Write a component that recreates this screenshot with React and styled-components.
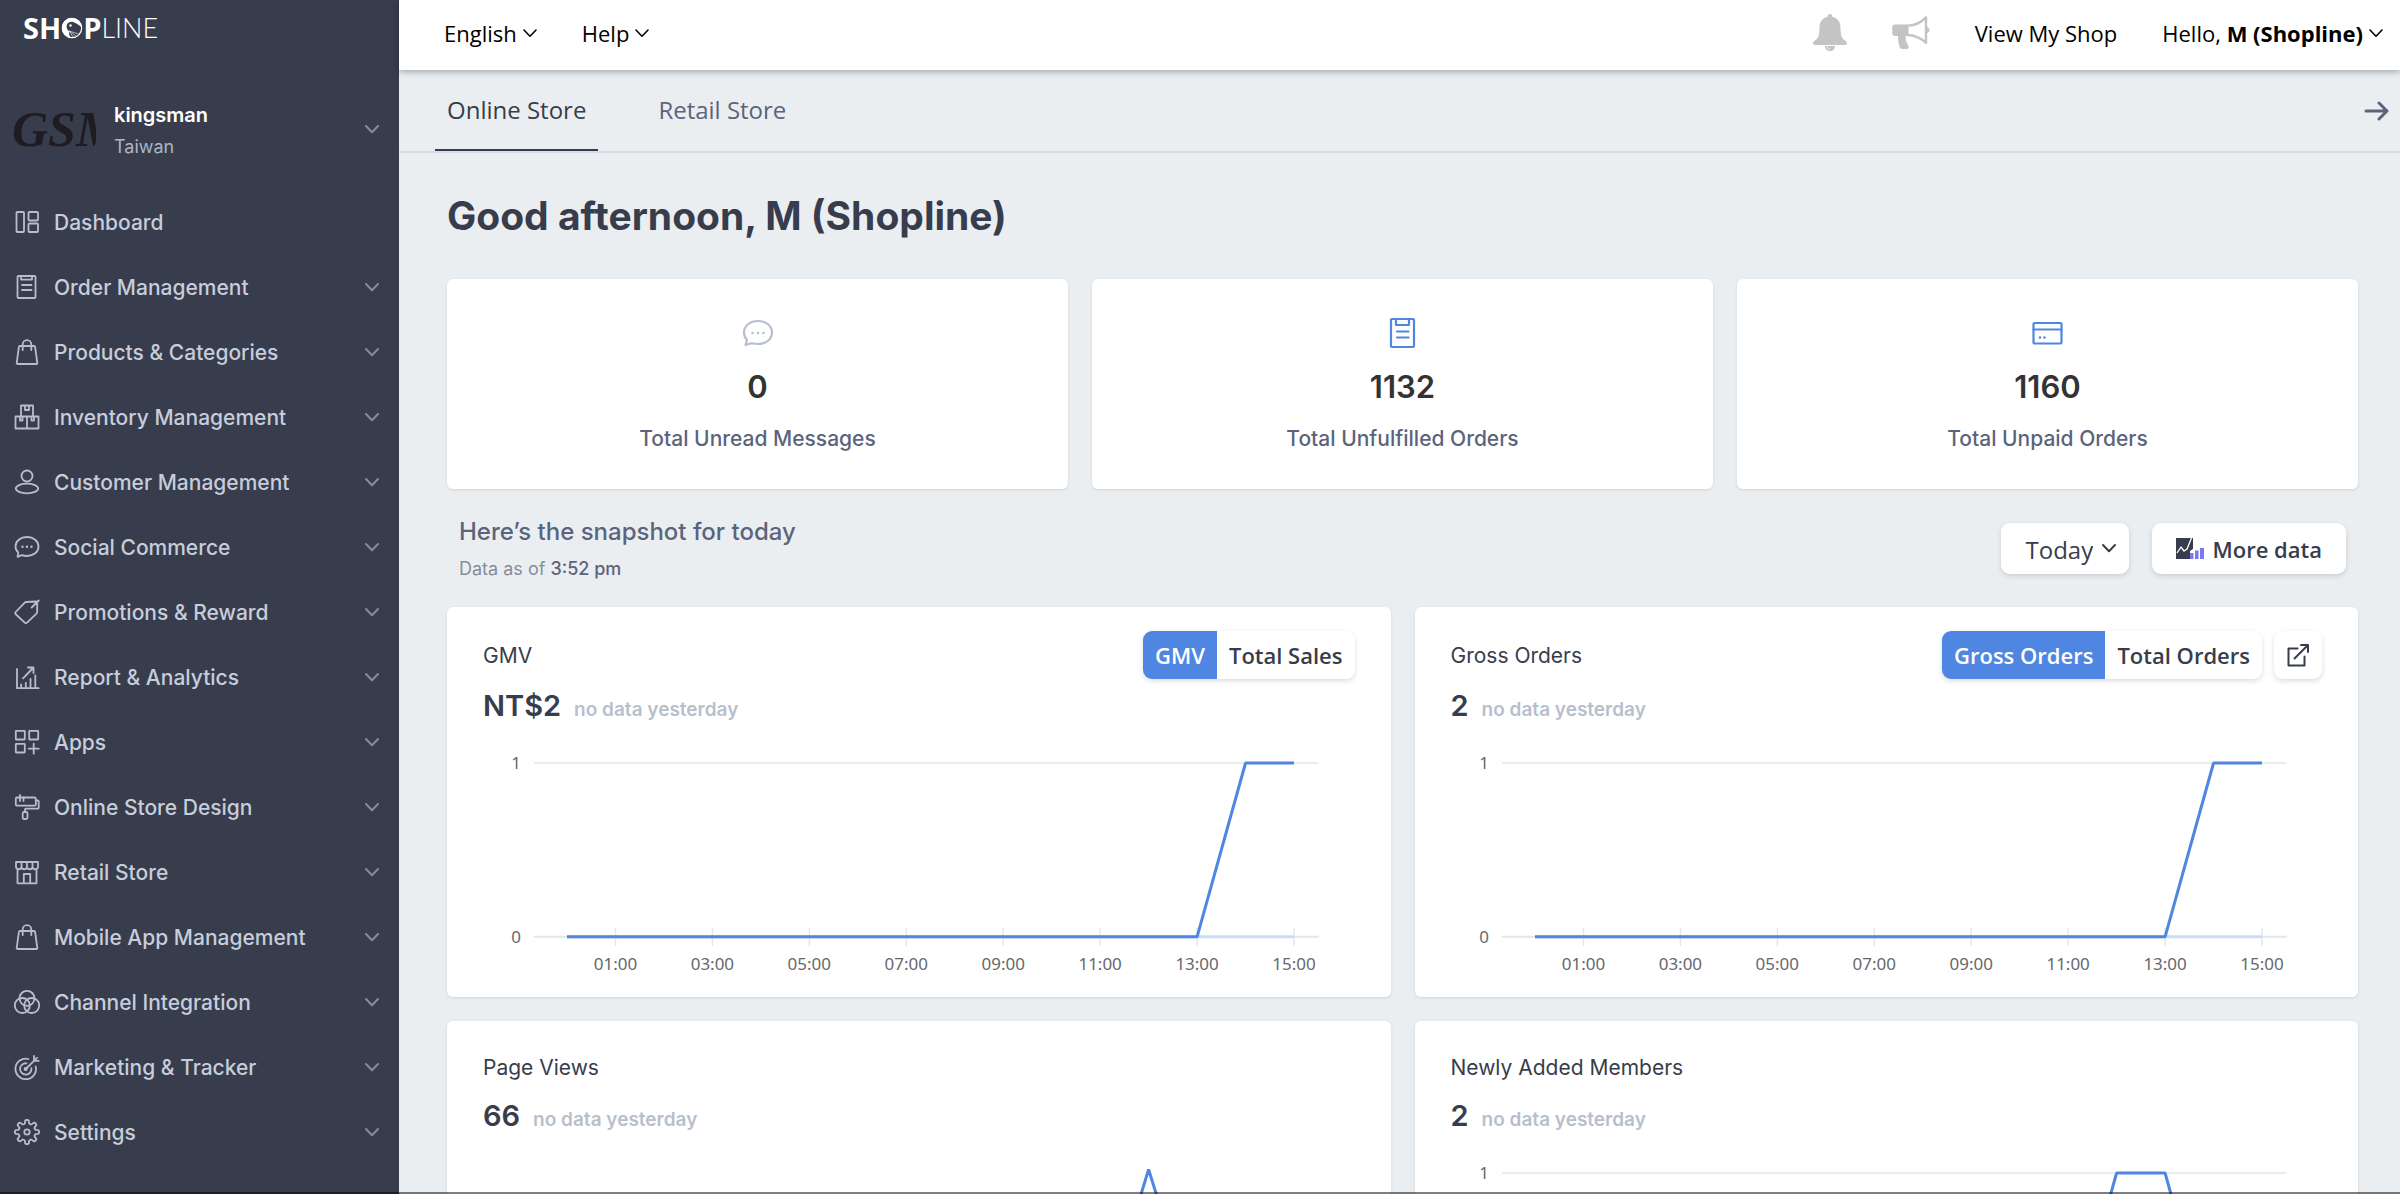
import React from 'react';
import styled, { createGlobalStyle, css } from 'styled-components';

const color = {
  navy: '#373d4c',
  navText: '#c7cddb',
  navIcon: '#b7bdcc',
  navChevron: '#858c9c',
  page: '#ebeef0',
  ink: '#373d4c',
  slate: '#5b647c',
  faint: '#b7bfcd',
  blue: '#4f86e2',
  rule: '#d3dbe3',
};
const inter = "Inter, 'Noto Sans', sans-serif";
const humanist = "'Open Sans', 'Noto Sans', sans-serif";

const GlobalStyle = createGlobalStyle`
  * { box-sizing: border-box; }
  body { margin: 0; background: ${color.page}; font-family: ${inter}; color: ${color.ink}; }
  button, select { font: inherit; color: inherit; margin: 0; }
  h1, h2, p { margin: 0; }
`;

const Shell = styled.div`
  display: grid;
  grid-template-columns: 399px minmax(0, 1fr);
  height: 100vh;
  overflow: hidden;
  &::after {
    content: '';
    position: fixed;
    inset: auto 0 0 0;
    height: 2px;
    background: rgba(0, 0, 0, 0.5);
  }
`;

/* ---------- sidebar ---------- */

const Sidebar = styled.aside`
  background: ${color.navy};
`;
const Logo = styled.a`
  display: flex;
  align-items: center;
  height: 56px;
  padding-left: 23px;
  color: #fff;
  text-decoration: none;
  line-height: 32px;
`;
const LogoBold = styled.span`
  font-family: ${humanist};
  font-size: 29px;
  font-weight: 700;
`;
const LogoThin = styled.span`
  font-family: Lato, sans-serif;
  font-size: 27px;
  font-weight: 300;
`;
const Profile = styled.button`
  display: flex;
  align-items: center;
  width: 100%;
  height: 120px;
  margin-top: 13px;
  padding: 0 20px 0 12px;
  border: 0;
  background: none;
  text-align: left;
`;
const Avatar = styled.span`
  flex: none;
  width: 84px;
  height: 56px;
  overflow: hidden;
  white-space: nowrap;
  font: italic 700 50px/56px 'Liberation Serif', serif;
  color: #1e1c20;
`;
const ProfileText = styled.span`
  flex: 1;
  display: grid;
  gap: 4px;
  padding: 4px 0 0 18px;
`;
const ShopName = styled.span`
  font-size: 20px;
  line-height: 28px;
  font-weight: 600;
  color: #fff;
`;
const ShopRegion = styled.span`
  font-size: 18px;
  line-height: 28px;
  color: #adb4c3;
`;
const NavItem = styled.button`
  display: flex;
  align-items: center;
  gap: 14px;
  width: 100%;
  height: 65px;
  padding: 0 20px 0 14px;
  border: 0;
  background: none;
  text-align: left;
  font-size: 21px;
  font-weight: 500;
  color: ${color.navText};
`;
const NavLabel = styled.span`
  flex: 1;
  padding-top: 2px;
`;
const LineIcon = styled.svg`
  flex: none;
  fill: none;
  stroke: ${(p) => p.$color};
  stroke-width: ${(p) => p.$weight || 1.8};
  stroke-linecap: round;
  stroke-linejoin: round;
`;

/* ---------- top bar and tabs ---------- */

const Page = styled.div`
  min-width: 0;
`;
const TopBar = styled.header`
  position: relative;
  display: flex;
  align-items: center;
  justify-content: space-between;
  height: 70px;
  padding: 0 17px 4px 45px;
  background: #fff;
  box-shadow: 0 2px 6px rgba(0, 0, 0, 0.3);
  font-family: ${humanist};
  font-size: 22px;
  color: #000;
`;
const TopGroup = styled.div`
  display: flex;
  align-items: center;
  gap: 45px;
`;
const TopButton = styled.button`
  display: flex;
  align-items: center;
  gap: 6px;
  padding: 0;
  border: 0;
  background: none;
`;
const TopLink = styled.a`
  color: inherit;
  text-decoration: none;
`;
const Tabs = styled.nav`
  display: flex;
  align-items: stretch;
  gap: 48px;
  height: 83px;
  padding: 0 11px 0 36px;
  border-bottom: 2px solid ${color.rule};
  font-family: ${humanist};
  font-size: 24px;
`;
const Tab = styled.a`
  display: flex;
  align-items: center;
  padding: 0 12px;
  border-bottom: 2px solid ${(p) => (p.$active ? color.ink : 'transparent')};
  color: ${(p) => (p.$active ? color.ink : color.slate)};
  text-decoration: none;
`;
const TabArrow = styled.button`
  display: flex;
  align-items: center;
  margin-left: auto;
  padding: 0;
  border: 0;
  background: none;
`;

/* ---------- content ---------- */

const Content = styled.main`
  padding: 39px 42px 0 48px;
`;
const Greeting = styled.h1`
  margin-bottom: 39px;
  font-size: 39px;
  line-height: 48px;
  font-weight: 700;
`;
const CardGrid = styled.div`
  display: grid;
  grid-template-columns: repeat(${(p) => p.$columns}, minmax(0, 1fr));
  gap: 24px;
`;
const card = css`
  background: #fff;
  border-radius: 6px;
  box-shadow: 0 1px 3px rgba(55, 61, 76, 0.14);
`;
const StatCard = styled.section`
  ${card}
  display: flex;
  flex-direction: column;
  align-items: center;
  gap: 18px;
  padding: 38px 24px 36px;
`;
const StatValue = styled.p`
  font-size: 31px;
  line-height: 40px;
  font-weight: 600;
  color: #333;
`;
const StatLabel = styled.h2`
  font-size: 21px;
  line-height: 28px;
  font-weight: 500;
  color: ${color.slate};
`;
const SnapshotBar = styled.div`
  display: flex;
  align-items: center;
  gap: 23px;
  margin: 27px 0 26px;
  padding: 0 12px;
`;
const SnapshotText = styled.div`
  flex: 1;
  display: grid;
  gap: 9px;
`;
const SnapshotTitle = styled.h2`
  font-size: 24px;
  line-height: 32px;
  font-weight: 500;
  color: ${color.slate};
`;
const SnapshotTime = styled.p`
  font-size: 18px;
  line-height: 24px;
  color: #858d9d;
`;
const Time = styled.span`
  font-weight: 500;
  color: ${color.slate};
`;
const raised = css`
  border: 0;
  border-radius: 9px;
  background: #fff;
  box-shadow: 0 2px 5px rgba(55, 61, 76, 0.18);
`;
const SelectWrap = styled.div`
  position: relative;
  display: flex;
`;
const RangeSelect = styled.select`
  ${raised}
  appearance: none;
  height: 51px;
  padding: 2px 36px 0 24px;
  font-family: ${humanist};
  font-size: 24px;
`;
const SelectMark = styled.span`
  position: absolute;
  top: 18px;
  right: 13px;
  display: flex;
  pointer-events: none;
`;
const MoreButton = styled.button`
  ${raised}
  display: flex;
  align-items: center;
  gap: 8px;
  height: 51px;
  padding: 0 24px;
  font-family: ${humanist};
  font-size: 22px;
  font-weight: 600;
`;
const ChartCard = styled.section`
  ${card}
  padding: 24px 36px;
`;
const ChartHead = styled.div`
  display: flex;
  align-items: center;
  gap: 12px;
  min-height: 44px;
`;
const ChartTitle = styled.h2`
  flex: 1;
  padding-top: 2px;
  font-size: 21px;
  line-height: 28px;
  font-weight: 400;
`;
const Toggle = styled.div`
  ${raised}
  display: flex;
`;
const ToggleButton = styled.button`
  height: 48px;
  padding: 0 12px;
  border: 0;
  border-radius: 9px;
  font-family: ${humanist};
  font-size: 22px;
  font-weight: 600;
  background: ${(p) => (p.$on ? color.blue : '#fff')};
  color: ${(p) => (p.$on ? '#fff' : color.ink)};
  &:first-child {
    border-top-right-radius: 0;
    border-bottom-right-radius: 0;
  }
`;
const OpenButton = styled.button`
  ${raised}
  display: flex;
  align-items: center;
  justify-content: center;
  width: 48px;
  height: 48px;
  padding: 0;
`;
const ValueRow = styled.div`
  display: flex;
  align-items: baseline;
  gap: 13px;
  height: 40px;
  margin-top: 7px;
  line-height: 40px;
`;
const Value = styled.p`
  font-size: 29px;
  font-weight: 600;
`;
const ValueNote = styled.p`
  font-size: 19px;
  font-weight: 600;
  color: ${color.faint};
`;
const ChartSvg = styled.svg`
  display: block;
  width: 100%;
  overflow: visible;
  text {
    font: 17px 'Noto Sans', sans-serif;
    fill: #66686d;
  }
`;

/* ---------- icons ---------- */

const gearPath = (() => {
  const pts = [];
  for (let i = 0; i < 8; i++) {
    [[-14, 8.9], [-9, 11.6], [9, 11.6], [14, 8.9]].forEach(([d, r]) => {
      const a = ((i * 45 + d - 90) * Math.PI) / 180;
      pts.push(`${(13 + r * Math.cos(a)).toFixed(2)} ${(13 + r * Math.sin(a)).toFixed(2)}`);
    });
  }
  let d = `M${pts[0]}`;
  for (let i = 0; i < 32; i++) {
    const next = pts[(i + 1) % 32];
    d += i % 4 === 3 ? `A2.2 2.2 0 0 0 ${next}` : i % 4 === 1 ? `A3 3 0 0 1 ${next}` : `L${next}`;
  }
  return `${d}Z`;
})();

const navIcons = {
  dashboard: (
    <>
      <rect x="2.5" y="3" width="7.5" height="20" rx="1" />
      <rect x="14.5" y="3" width="9.5" height="8.5" rx="1" />
      <rect x="14.5" y="14.5" width="9.5" height="8.5" rx="1" />
    </>
  ),
  clipboard: (
    <>
      <rect x="3.5" y="2" width="18" height="22" rx="1" />
      <path d="M7 2v3.6h11V2M8 11h9.5M8 16h9.5" />
    </>
  ),
  bag: (
    <>
      <path d="M6 7h14c.7 0 1 .3 1.1 1l2.2 15.8c.1.8-.3 1.2-1 1.2H3.8c-.8 0-1.200-.4-1.100-1.200L4.900 8c.1-.7.5-1 1.100-1z" />
      <path d="M8.700 11V5.500a4.300 4.300 0 0 1 8.600 0V11" />
    </>
  ),
  boxes: (
    <path d="M7 12.5V1.5h12v11M1.5 12.500h23v12h-23zM13 12.500v12M11 1.500v4.500h4V1.500M6 12.500V16.500h2.500v-4M17.500 12.500v4H20v-4" />
  ),
  user: (
    <>
      <circle cx="13" cy="7" r="5.5" />
      <ellipse cx="13" cy="19.5" rx="11.2" ry="4.8" />
    </>
  ),
  chat: (
    <>
      <path d="M3.500 22.800l.8-4.300C2.500 17 1.500 15 1.500 12.500 1.500 7 6.500 3 13 3s11.500 4 11.500 9.500S19.500 22 13 22c-2 0-3.700-.3-5.200-.8z" />
      <path d="M8.500 12.700h.01M13 12.700h.01M17.500 12.700h.01" strokeWidth="2.4" />
    </>
  ),
  tag: (
    <path d="M1.700 13L10.500 3.800c.5-.5 1-.8 1.700-.8L21.500 2.500c1.200 0 1.700.5 1.700 1.500V13c0 .7-.2 1.200-.7 1.700l-9.200 8.700c-1 .9-1.900.9-2.800 0L2 15.500c-.9-.9-1-1.700-.3-2.500zM17.700 8.500l7-7" />
  ),
  report: (
    <path d="M3 5v19.200h21.700M7.200 20.500v3.500M11.800 18.800V24M16.500 15v9M21.300 11.500V24M9 14.300L19.500 3.500M14 3.500h5.500V9" />
  ),
  apps: (
    <>
      <rect x="1.8" y="1.8" width="9" height="8.7" rx=".5" />
      <rect x="15.2" y="1.8" width="9" height="8.7" rx=".5" />
      <rect x="1.8" y="14.8" width="9" height="8.7" rx=".5" />
      <path d="M19.700 14.700v10M14.700 19.700h10" />
    </>
  ),
  roller: (
    <>
      <rect x="1.8" y="3.5" width="20" height="8.2" rx="1.2" />
      <path d="M21.800 6.500h1.900c.7 0 1 .3 1 1v6.200c0 .7-.3 1-1 1H12c-.7 0-1 .3-1 1V18M6 1v6M9.500 3.500V7" />
      <rect x="8.7" y="18" width="4.8" height="7" rx="1.5" />
    </>
  ),
  store: (
    <path d="M2 3h22v5a2.800 2.800 0 0 1-5.500 0 2.800 2.800 0 0 1-5.500 0 2.800 2.800 0 0 1-5.500 0A2.800 2.800 0 0 1 2 8zM7.500 8V3M13 8V3M18.500 8V3M3.500 11.500v12.800h19V11.500M9.800 24.300V15h6.400v9.300" />
  ),
  circles: (
    <>
      <circle cx="13" cy="9.3" r="7.5" />
      <circle cx="8.3" cy="16.5" r="7.5" />
      <circle cx="17.7" cy="16.5" r="7.5" />
    </>
  ),
  target: (
    <>
      <path d="M14.300 5A10.300 10.300 0 1 0 21.700 12.500M12.500 9.300A5.700 5.700 0 1 0 17.400 14.200M11.700 15L20 6.800M20 6.800V1.800M20 6.800h4.800M20 6.800l3-3" />
      <circle cx="11.7" cy="15" r="1.2" />
    </>
  ),
  gear: (
    <>
      <path d={gearPath} />
      <circle cx="13" cy="13" r="2.7" />
    </>
  ),
};

function NavIcon({ name }) {
  return (
    <LineIcon $color={color.navIcon} width="26" height="26" viewBox="0 0 26 26" aria-hidden="true">
      {navIcons[name]}
    </LineIcon>
  );
}

function Chevron({ stroke, size = 14, weight = 2 }) {
  return (
    <LineIcon $color={stroke} $weight={weight} width={size} height={size} viewBox="0 0 14 14" aria-hidden="true">
      <path d="M1 4l6 6.200L13 4" />
    </LineIcon>
  );
}

function LogoBird() {
  return (
    <svg width="22" height="22" viewBox="0 0 22 22" role="img" aria-label="O">
      <circle cx="11" cy="11" r="9.7" fill="none" stroke="#fff" strokeWidth="1.2" />
      <path d="M9 1C3.800 2.200 1 6.300 1 11s3.500 9.200 9 10c-1.600-2-2.200-4.200-1.800-6.600C5.500 12.500 5 9.500 6.200 7 7.600 5 10 4.300 12 5c2.500.8 5 2.200 8.500 5C20.200 5 16 .2 9 1z" fill="#fff" />
      <circle cx="9.5" cy="8.5" r="1.2" fill="#fff" />
      <path d="M8.200 14l7.500 5.500M8.200 14l4.300 6.500M8.200 14l9.500 3" stroke="#fff" strokeWidth=".6" fill="none" />
    </svg>
  );
}

function Bell() {
  return (
    <svg width="34" height="38" viewBox="0 0 34 38" aria-hidden="true">
      <path d="M17 0c1.300 0 2.200.9 2.200 2.200v.6c5 1 8.300 5 8.300 10.200 0 8 .8 11.500 5.700 14.500 1.500 1.300.7 3.500-1.200 3.500H2c-1.900 0-2.700-2.200-1.200-3.500C5.700 24.500 6.500 21 6.500 13c0-5.200 3.300-9.200 8.300-10.200v-.6C14.800.9 15.700 0 17 0z" fill="#c4c4c4" />
      <path d="M12 32h10c0 3-2 5-5 5s-5-2-5-5z" fill="#c4c4c4" />
      <path d="M14 32.500c.3 1.500 1.100 2.400 2.600 2.700" stroke="#fff" strokeWidth="1" fill="none" />
    </svg>
  );
}

function Megaphone() {
  return (
    <svg width="38" height="34" viewBox="0 0 38 34" aria-hidden="true">
      <path d="M3 8.500h13.500v11.500H3c-1.700 0-2.700-1-2.700-2.700v-6C.3 9.500 1.300 8.500 3 8.500z" fill="#c4c4c4" />
      <path d="M6 19h8c-1 4 .2 7.500 2.500 11 .6 1.500-.2 3-1.700 3h-4.300c-1.500 0-2.500-.8-2.900-2.200C6.500 27 5.800 23 6 19z" fill="#c4c4c4" />
      <path d="M16 9.600c7-.2 13.500-3.600 18-8.300v25.500c-4.500-4.300-11-7.300-18-7.800" fill="none" stroke="#c4c4c4" strokeWidth="2.4" strokeLinejoin="round" />
      <path d="M35 11.500a2.800 2.800 0 0 1 0 5.400z" fill="#c4c4c4" stroke="#c4c4c4" />
    </svg>
  );
}

function MoreDataIcon() {
  return (
    <svg width="28" height="22" viewBox="0 0 28 22" aria-hidden="true">
      <path d="M0 0h17v11l-3 2v8H0z" fill="#373d4c" />
      <path d="M1 15l4-6 3 4 3-2L15.500 0" stroke="#fff" strokeWidth="1.3" fill="none" />
      <path d="M14 15h3.500v6H14zM19 12.500h3.500V21H19zM24 10h4v11h-4z" fill="#7b78f2" />
    </svg>
  );
}

/* ---------- charts ---------- */

const STEP = 48.5;
const ZERO = 211;
const TOP = 37;
const xAt = (i) => 84 + STEP * i;
const HOURS = [1, 3, 5, 7, 9, 11, 13, 15];

function LineChart({ label, points, max, topLabel }) {
  const yAt = (v) => ZERO - (v / max) * (ZERO - TOP);
  const line = points.map((v, i) => `${xAt(i)},${yAt(v)}`).join(' ');
  return (
    <ChartSvg viewBox="0 0 872 247" role="img" aria-label={label}>
      {topLabel && (
        <>
          <path d={`M51 ${TOP}H836`} stroke="#e9edee" strokeWidth="2" />
          <text x="38" y={TOP + 6} textAnchor="end">{topLabel}</text>
        </>
      )}
      <path d={`M51 ${ZERO}H836`} stroke="#e4e6e8" strokeWidth="2" />
      <text x="38" y={ZERO + 6} textAnchor="end">0</text>
      {HOURS.map((h) => (
        <React.Fragment key={h}>
          <path d={`M${xAt(h)} ${ZERO - 9}v18`} stroke="#e4e6e8" strokeWidth="1.5" />
          <text x={xAt(h)} y={ZERO + 33} textAnchor="middle">{`${String(h).padStart(2, '0')}:00`}</text>
        </React.Fragment>
      ))}
      <path d={`M${xAt(0)} ${ZERO}H${xAt(15)}`} stroke="#c9dcf9" strokeWidth="3" />
      <polyline points={line} fill="none" stroke={color.blue} strokeWidth="3" strokeLinejoin="bevel" />
    </ChartSvg>
  );
}

/* ---------- data ---------- */

const NAV = [
  ['Dashboard', 'dashboard'],
  ['Order Management', 'clipboard'],
  ['Products & Categories', 'bag'],
  ['Inventory Management', 'boxes'],
  ['Customer Management', 'user'],
  ['Social Commerce', 'chat'],
  ['Promotions & Reward', 'tag'],
  ['Report & Analytics', 'report'],
  ['Apps', 'apps'],
  ['Online Store Design', 'roller'],
  ['Retail Store', 'store'],
  ['Mobile App Management', 'bag'],
  ['Channel Integration', 'circles'],
  ['Marketing & Tracker', 'target'],
  ['Settings', 'gear'],
];

const STATS = [
  {
    value: '0',
    label: 'Total Unread Messages',
    tint: '#b6bfd0',
    icon: (
      <>
        <path d="M3.500 28l1.500-5C3 20.800 2 18.500 2 15.500 2 8.800 8 4 16 4s14 4.800 14 11.500S24 27 16 27c-2.500 0-4.500-.3-6.500-.8z" />
        <path d="M10.500 16h.01M16 16h.01M21.500 16h.01" strokeWidth="2.6" />
      </>
    ),
  },
  {
    value: '1132',
    label: 'Total Unfulfilled Orders',
    tint: color.blue,
    icon: (
      <>
        <rect x="4" y="2" width="23" height="28" rx="1" />
        <path d="M9 2.500V8h13V2.500M10 14.500h11.500M10 20.500h11.500" />
      </>
    ),
  },
  {
    value: '1160',
    label: 'Total Unpaid Orders',
    tint: color.blue,
    icon: (
      <>
        <rect x="1.5" y="6" width="28" height="20.500" rx="1" />
        <path d="M1.500 12.500h28" />
        <path d="M8 20.500h.01M12.500 20.500h.01" strokeWidth="2.6" />
      </>
    ),
  },
];

const zeros = (n) => Array(n).fill(0);
const CHARTS = [
  { title: 'GMV', value: 'NT$2', toggle: ['GMV', 'Total Sales'], points: [...zeros(14), 1, 1], max: 1, topLabel: '1' },
  { title: 'Gross Orders', value: '2', toggle: ['Gross Orders', 'Total Orders'], open: true, points: [...zeros(14), 1, 1], max: 1, topLabel: '1' },
  { title: 'Page Views', value: '66', points: [...zeros(10), 1, 5, 50, 6, 3, 1], max: 49 },
  { title: 'Newly Added Members', value: '2', points: [...zeros(12), 1, 1, 0, 0], max: 1, topLabel: '1' },
];

export default function App() {
  return (
    <Shell>
      <GlobalStyle />
      <Sidebar>
        <Logo href="#home">
          <LogoBold>SH</LogoBold>
          <LogoBird />
          <LogoBold>P</LogoBold>
          <LogoThin>LINE</LogoThin>
        </Logo>
        <Profile type="button">
          <Avatar aria-hidden="true">GSM</Avatar>
          <ProfileText>
            <ShopName>kingsman</ShopName>
            <ShopRegion>Taiwan</ShopRegion>
          </ProfileText>
          <Chevron stroke={color.navChevron} />
        </Profile>
        <nav>
          {NAV.map(([label, icon]) => (
            <NavItem key={label} type="button">
              <NavIcon name={icon} />
              <NavLabel>{label}</NavLabel>
              {label !== 'Dashboard' && <Chevron stroke={color.navChevron} />}
            </NavItem>
          ))}
        </nav>
      </Sidebar>
      <Page>
        <TopBar>
          <TopGroup>
            <TopButton type="button">
              English <Chevron stroke="#000" weight={1.6} />
            </TopButton>
            <TopButton type="button">
              Help <Chevron stroke="#000" weight={1.6} />
            </TopButton>
          </TopGroup>
          <TopGroup>
            <TopButton type="button" aria-label="Notifications"><Bell /></TopButton>
            <TopButton type="button" aria-label="Announcements"><Megaphone /></TopButton>
            <TopLink href="#shop">View My Shop</TopLink>
            <TopButton type="button">
              <span>Hello, <b>M (Shopline)</b></span>
              <Chevron stroke="#000" weight={1.6} />
            </TopButton>
          </TopGroup>
        </TopBar>
        <Tabs>
          <Tab href="#online" $active>Online Store</Tab>
          <Tab href="#retail">Retail Store</Tab>
          <TabArrow type="button" aria-label="Next">
            <LineIcon $color={color.slate} $weight={3} width="25" height="20" viewBox="0 0 25 20" aria-hidden="true">
              <path d="M2 10h21M15 2l8 8-8 8" />
            </LineIcon>
          </TabArrow>
        </Tabs>
        <Content>
          <Greeting>Good afternoon, M (Shopline)</Greeting>
          <CardGrid $columns={3}>
            {STATS.map((s) => (
              <StatCard key={s.label}>
                <LineIcon $color={s.tint} $weight={2.2} width="32" height="32" viewBox="0 0 32 32" aria-hidden="true">
                  {s.icon}
                </LineIcon>
                <StatValue>{s.value}</StatValue>
                <StatLabel>{s.label}</StatLabel>
              </StatCard>
            ))}
          </CardGrid>
          <SnapshotBar>
            <SnapshotText>
              <SnapshotTitle>Here’s the snapshot for today</SnapshotTitle>
              <SnapshotTime>Data as of <Time>3:52 pm</Time></SnapshotTime>
            </SnapshotText>
            <SelectWrap>
              <RangeSelect aria-label="Date range" defaultValue="today">
                <option value="today">Today</option>
              </RangeSelect>
              <SelectMark><Chevron stroke={color.ink} /></SelectMark>
            </SelectWrap>
            <MoreButton type="button">
              <MoreDataIcon />
              More data
            </MoreButton>
          </SnapshotBar>
          <CardGrid $columns={2}>
            {CHARTS.map((c) => (
              <ChartCard key={c.title}>
                <ChartHead>
                  <ChartTitle>{c.title}</ChartTitle>
                  {c.toggle && (
                    <Toggle>
                      {c.toggle.map((t, i) => (
                        <ToggleButton key={t} type="button" $on={i === 0}>{t}</ToggleButton>
                      ))}
                    </Toggle>
                  )}
                  {c.open && (
                    <OpenButton type="button" aria-label="Open report">
                      <LineIcon $color={color.ink} $weight={2} width="24" height="24" viewBox="0 0 24 24" aria-hidden="true">
                        <path d="M11.500 5.500H2.500v17h16v-9M8.500 15.500L22 2M15 2h7v7" />
                      </LineIcon>
                    </OpenButton>
                  )}
                </ChartHead>
                <ValueRow>
                  <Value>{c.value}</Value>
                  <ValueNote>no data yesterday</ValueNote>
                </ValueRow>
                <LineChart label={`${c.title} by hour`} points={c.points} max={c.max} topLabel={c.topLabel} />
              </ChartCard>
            ))}
          </CardGrid>
        </Content>
      </Page>
    </Shell>
  );
}
